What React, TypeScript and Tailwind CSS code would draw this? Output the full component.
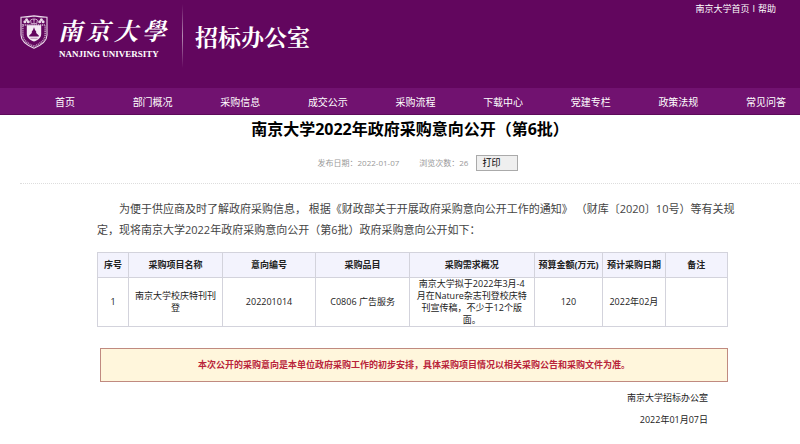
const navItems = [
  "首页",
  "部门概况",
  "采购信息",
  "成交公示",
  "采购流程",
  "下载中心",
  "党建专栏",
  "政策法规",
  "常见问答",
];

const columns = [
  { title: "序号", width: "w-[5%]" },
  { title: "采购项目名称", width: "w-[15%]" },
  { title: "意向编号", width: "w-[15%]" },
  { title: "采购品目", width: "w-[15%]" },
  { title: "采购需求概况", width: "w-[20%]" },
  { title: "预算金额(万元)", width: "w-[11%]" },
  { title: "预计采购日期", width: "w-[10%]" },
  { title: "备注", width: "w-[10%]" },
];

const rows = [
  [
    "1",
    "南京大学校庆特刊刊登",
    "202201014",
    "C0806 广告服务",
    "南京大学拟于2022年3月-4月在Nature杂志刊登校庆特刊宣传稿，不少于12个版面。",
    "120",
    "2022年02月",
    "",
  ],
];

function Crest() {
  return (
    <svg viewBox="0 0 28 34" className="h-[34px] w-7" fill="none" aria-hidden="true">
      <path
        d="M1 2.2Q7.5 2 14 .9Q20.500 2 27 2.200V20C27 27 20.500 30.500 14 33.200C7.500 30.500 1 27 1 20Z"
        stroke="#eadbea"
        strokeWidth="1.100"
      />
      <path d="M2.800 10H25.200V19.500C25.200 25.500 20 28.800 14 31.500C8 28.800 2.800 25.500 2.800 19.500Z" stroke="#b58ab3" strokeWidth="1.800" strokeDasharray="1.200 .7" />
      <path d="M6.800 10.200H21.200V18.800C21.200 22.800 18.200 25 14 26.600C9.800 25 6.800 22.800 6.800 18.800Z" fill="#f4eaf4" />
      <path d="M14 12.200L15 15L16.200 16.500V18L18.800 20.500V21.600H9.200V20.500L11.800 18V16.500L13 15Z" fill="#62065e" />
      <path d="M10.500 23.300H17.500" stroke="#a877a6" strokeWidth=".8" />
      <g fill="#eadbea">
        <circle cx="6.600" cy="4.800" r="1.500" />
        <circle cx="4.900" cy="6.800" r="1.500" />
        <circle cx="8.300" cy="6.800" r="1.500" />
        <circle cx="21.400" cy="4.800" r="1.500" />
        <circle cx="19.700" cy="6.800" r="1.500" />
        <circle cx="23.100" cy="6.800" r="1.500" />
      </g>
      <path d="M11.200 8.600L10.600 5Q12.200 3.200 14 5Q15.800 3.200 17.400 5L16.800 8.600Z" stroke="#cfaacd" strokeWidth="1" />
      <path d="M14 2.800V8.400" stroke="#cfaacd" strokeWidth=".9" />
    </svg>
  );
}

export default function App() {
  return (
    <div className="bg-white pb-3 font-['Open_Sans','Noto_Sans_CJK_SC',sans-serif] text-[9px] leading-3 text-[#222]">
      <header className="flex h-[88px] items-start justify-between bg-[#62065e] pr-6 pl-5 text-white">
        <div className="flex">
          <div className="pt-[15px]">
            <Crest />
          </div>
          <div className="ml-[10px] pt-3">
            <div className="flex w-[108px] justify-between font-['Noto_Serif_CJK_SC','Noto_Sans_CJK_SC',serif] text-[24px] leading-9 font-bold italic">
              <span>南</span>
              <span>京</span>
              <span>大</span>
              <span>學</span>
            </div>
            <div className="pl-px font-['Liberation_Serif',serif] text-[9px] leading-3 font-bold whitespace-nowrap">
              NANJING UNIVERSITY
            </div>
          </div>
          <div className="mt-1 ml-4 h-16 w-px bg-linear-to-b from-transparent via-[#b58ab3] to-transparent" />
          <h1 className="ml-3 pt-[19px] font-['Noto_Serif_CJK_SC','Noto_Sans_CJK_SC',serif] text-[23px] leading-9 font-bold whitespace-nowrap">
            招标办公室
          </h1>
        </div>
        <div className="flex gap-[3px] pt-[3px] whitespace-nowrap">
          <a href="#home">南京大学首页</a>
          <span>I</span>
          <a href="#help">帮助</a>
        </div>
      </header>

      <nav className="flex h-[27px] items-center justify-between border-b border-[#5d0a5a] bg-[#711270] pt-px pr-[14px] pl-[45px] text-[10px] leading-4 text-white">
        {navItems.map((item) => (
          <a key={item} href="#nav" className="w-10 text-center whitespace-nowrap">
            {item}
          </a>
        ))}
      </nav>

      <main>
        <div className="ml-5 border-b border-dotted border-[#ddd] pt-1 pb-3">
          <h2 className="text-center text-[16px] leading-5 font-bold text-black">
            南京大学2022年政府采购意向公开（第6批）
          </h2>
          <div className="mt-4 flex items-center justify-center gap-2 pl-4 text-[8px] text-[#999]">
            <span className="mr-3">发布日期：2022-01-07</span>
            <span>浏览次数：26</span>
            <button
              type="button"
              className="h-4 w-[42px] border border-[#aaa] bg-[#efefef] pl-[5px] text-left text-[9px] leading-3 text-black"
            >
              打印
            </button>
          </div>
        </div>

        <article className="pr-[72px] pl-[97px]">
          <p className="-mr-3 pt-[14px] indent-[22px] text-[11px] leading-[21px] text-[#444]">
            为便于供应商及时了解政府采购信息， 根据《财政部关于开展政府采购意向公开工作的通知》 （财库〔2020〕10号）等有关规定，现将南京大学2022年政府采购意向公开（第6批）政府采购意向公开如下：
          </p>

          <table className="mt-3 w-full table-fixed border-collapse text-center">
            <thead>
              <tr className="h-[25px] bg-[#f3f3fd]">
                {columns.map((column) => (
                  <th
                    key={column.title}
                    scope="col"
                    className={`${column.width} border border-[#d3d3dc] p-0 font-bold whitespace-nowrap text-[#222]`}
                  >
                    {column.title}
                  </th>
                ))}
              </tr>
            </thead>
            <tbody>
              {rows.map((row) => (
                <tr key={row[0]} className="h-[49px]">
                  {row.map((cell, index) => (
                    <td key={index} className="border border-[#d3d3dc] px-[5px] py-0">
                      {cell}
                    </td>
                  ))}
                </tr>
              ))}
            </tbody>
          </table>

          <div className="mt-[21px] ml-[3px] border border-[#c08a80] bg-[#fff6dc] py-[10px] text-center font-bold text-[#b9243a]">
            本次公开的采购意向是本单位政府采购工作的初步安排，具体采购项目情况以相关采购公告和采购文件为准。
          </div>

          <div className="mt-[5px] pr-5 text-right leading-[22px]">
            <p>南京大学招标办公室</p>
            <p>2022年01月07日</p>
          </div>
        </article>
      </main>
    </div>
  );
}
